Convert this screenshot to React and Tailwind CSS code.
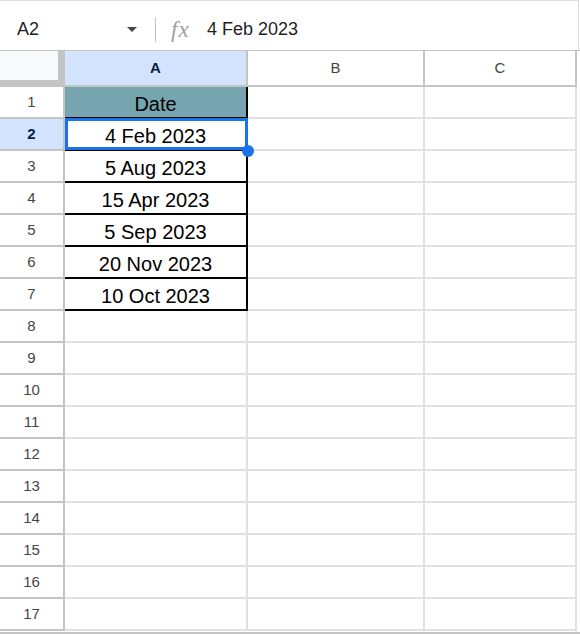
import React from 'react';

const dates = ['4 Feb 2023', '5 Aug 2023', '15 Apr 2023', '5 Sep 2023', '20 Nov 2023', '10 Oct 2023'];

function Row({ n, children, selected, headerCell, bordered }) {
  return (
    <div className="flex h-[32px]">
      {/* row number */}
      <div
        className={
          'w-[65px] shrink-0 border-r-2 border-b-2 border-[#c4c4c4] flex items-center justify-center text-[15px] ' +
          (selected ? 'bg-[#d3e3fd] text-[#041e49] font-bold' : 'bg-white text-[#444746]')
        }
      >
        {n}
      </div>

      {/* column A */}
      <div
        className={
          'w-[183px] shrink-0 border-r-2 border-b-2 flex items-end justify-center pb-[1px] text-[20px] leading-[23px] text-black ' +
          (bordered ? 'border-black ' : 'border-[#e1e1e1] ') +
          (headerCell ? 'bg-[#76a5af]' : 'bg-white')
        }
      >
        {children}
      </div>

      {/* columns B, C */}
      <div className="w-[177px] shrink-0 border-r-2 border-b-2 border-[#e1e1e1]" />
      <div className="w-[152px] shrink-0 border-r-2 border-b-2 border-[#e1e1e1]" />
      <div className="flex-1" />
    </div>
  );
}

export default function App() {
  const rows = [];
  for (let i = 1; i <= 17; i++) {
    let content = null;
    if (i === 1) content = 'Date';
    else if (i <= 7) content = dates[i - 2];
    rows.push(
      <Row key={i} n={i} selected={i === 2} headerCell={i === 1} bordered={i <= 7}>
        {content}
      </Row>
    );
  }

  return (
    <div className="relative w-[580px] h-[634px] bg-white overflow-hidden font-['Liberation_Sans',Arial,sans-serif]">
      {/* Formula bar */}
      <div className="w-[579px] h-[50px] pt-[7px] border-t border-r border-[#dadce0] flex items-center text-[18px] text-[#1f1f1f]">
        <div className="w-[127px] pl-[17px]">A2</div>
        <svg width="10" height="5" viewBox="0 0 10 5" className="shrink-0">
          <path d="M0 0 L10 0 L5 5 Z" fill="#444746" />
        </svg>
        <div className="ml-[18px] w-[1px] h-[25px] bg-[#c4c4c4]" />
        <div className="ml-[15px] w-[22px] text-[23px] leading-none italic text-[#9aa0a6] font-['Liberation_Serif',serif] tracking-[1px]">
          fx
        </div>
        <div className="ml-[14px]">4 Feb 2023</div>
      </div>

      {/* Column headers */}
      <div className="flex h-[37px] border-t border-[#c4c4c4] text-[15px]">
        <div className="w-[65px] h-[36px] shrink-0 bg-[#c4c4c4]">
          <div className="w-[58px] h-[29px] bg-[#f8f9fa]" />
        </div>
        <div className="w-[183px] h-[36px] shrink-0 bg-[#d3e3fd] border-r-2 border-b-2 border-[#c4c4c4] flex items-center justify-center font-bold text-[#041e49]">
          A
        </div>
        <div className="w-[177px] h-[36px] shrink-0 border-r-2 border-b-2 border-[#c4c4c4] flex items-center justify-center text-[#444746]">
          B
        </div>
        <div className="w-[152px] h-[36px] shrink-0 border-r-2 border-b-2 border-[#c4c4c4] flex items-center justify-center text-[#444746]">
          C
        </div>
        <div className="flex-1" />
      </div>

      {/* Grid rows */}
      <div>{rows}</div>
      <div className="mt-[1px] border-t-2 border-[#c4c4c4]" />

      {/* Selection A2 */}
      <div className="absolute top-[118px] left-[65px] w-[183px] h-[32px] border-[3px] border-[#1a73e8]" />
      <div className="absolute top-[145px] left-[242px] w-[12px] h-[12px] rounded-full bg-[#1a73e8]" />
    </div>
  );
}
